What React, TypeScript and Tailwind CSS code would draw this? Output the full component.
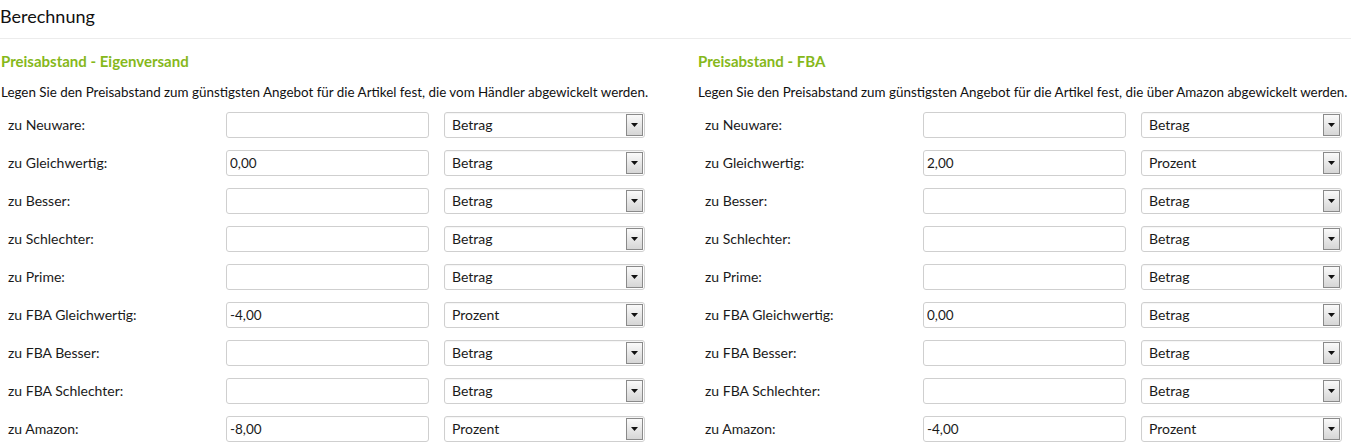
import React from "react";

type Row = { label: string; value: string; mode: "Betrag" | "Prozent" };

const leftRows: Row[] = [
  { label: "zu Neuware:", value: "", mode: "Betrag" },
  { label: "zu Gleichwertig:", value: "0,00", mode: "Betrag" },
  { label: "zu Besser:", value: "", mode: "Betrag" },
  { label: "zu Schlechter:", value: "", mode: "Betrag" },
  { label: "zu Prime:", value: "", mode: "Betrag" },
  { label: "zu FBA Gleichwertig:", value: "-4,00", mode: "Prozent" },
  { label: "zu FBA Besser:", value: "", mode: "Betrag" },
  { label: "zu FBA Schlechter:", value: "", mode: "Betrag" },
  { label: "zu Amazon:", value: "-8,00", mode: "Prozent" },
];

const rightRows: Row[] = [
  { label: "zu Neuware:", value: "", mode: "Betrag" },
  { label: "zu Gleichwertig:", value: "2,00", mode: "Prozent" },
  { label: "zu Besser:", value: "", mode: "Betrag" },
  { label: "zu Schlechter:", value: "", mode: "Betrag" },
  { label: "zu Prime:", value: "", mode: "Betrag" },
  { label: "zu FBA Gleichwertig:", value: "0,00", mode: "Betrag" },
  { label: "zu FBA Besser:", value: "", mode: "Betrag" },
  { label: "zu FBA Schlechter:", value: "", mode: "Betrag" },
  { label: "zu Amazon:", value: "-4,00", mode: "Prozent" },
];

const FakeSelect: React.FC<{ value: string }> = ({ value }) => (
  <div className="flex h-[26px] w-[201px] items-center rounded-[3px] border border-[#cfcfcf] bg-white pl-[7px] pr-[1px] shadow-[inset_0_1px_1px_rgba(0,0,0,0.04)]">
    <span className="flex-1 text-[14px] text-[#1a1a1a]">{value}</span>
    <span className="flex h-[22px] w-[17px] items-center justify-center border border-[#8a8a8a] bg-gradient-to-b from-[#fafafa] to-[#d6d6d6]">
      <svg width="7" height="4" viewBox="0 0 7 4">
        <path d="M0 0h7L3.5 4z" fill="#111" />
      </svg>
    </span>
  </div>
);

const Section: React.FC<{ title: string; text: string; rows: Row[] }> = ({
  title,
  text,
  rows,
}) => (
  <div className="w-[652px]">
    <h3 className="mt-[11px] pl-[1px] text-[15px] font-bold text-[#86b81b]">
      {title}
    </h3>
    <p className="mt-[9px] whitespace-nowrap pl-[1px] text-[13.4px] text-[#111]">
      {text}
    </p>
    <div className="mt-[10px] flex flex-col gap-[12px]">
      {rows.map((r) => (
        <div key={r.label} className="flex items-center">
          <span className="w-[226px] pl-[8px] text-[14px] text-[#1a1a1a]">
            {r.label}
          </span>
          <input
            readOnly
            value={r.value}
            className="h-[26px] w-[203px] rounded-[3px] border border-[#cfcfcf] bg-white px-[3px] text-[13.5px] text-[#1a1a1a] outline-none"
          />
          <div className="ml-[15px]">
            <FakeSelect value={r.mode} />
          </div>
        </div>
      ))}
    </div>
  </div>
);

export default function App() {
  return (
    <div
      className="h-[448px] w-[1351px] overflow-hidden bg-white"
      style={{ fontFamily: "Lato, 'Open Sans', sans-serif" }}
    >
      <div className="border-b border-[#ececec] pb-[8px] pt-[3px] text-[18px] text-[#111]">
        Berechnung
      </div>
      <div className="flex gap-[45px]">
        <Section
          title="Preisabstand - Eigenversand"
          text="Legen Sie den Preisabstand zum günstigsten Angebot für die Artikel fest, die vom Händler abgewickelt werden."
          rows={leftRows}
        />
        <Section
          title="Preisabstand - FBA"
          text="Legen Sie den Preisabstand zum günstigsten Angebot für die Artikel fest, die über Amazon abgewickelt werden."
          rows={rightRows}
        />
      </div>
    </div>
  );
}
